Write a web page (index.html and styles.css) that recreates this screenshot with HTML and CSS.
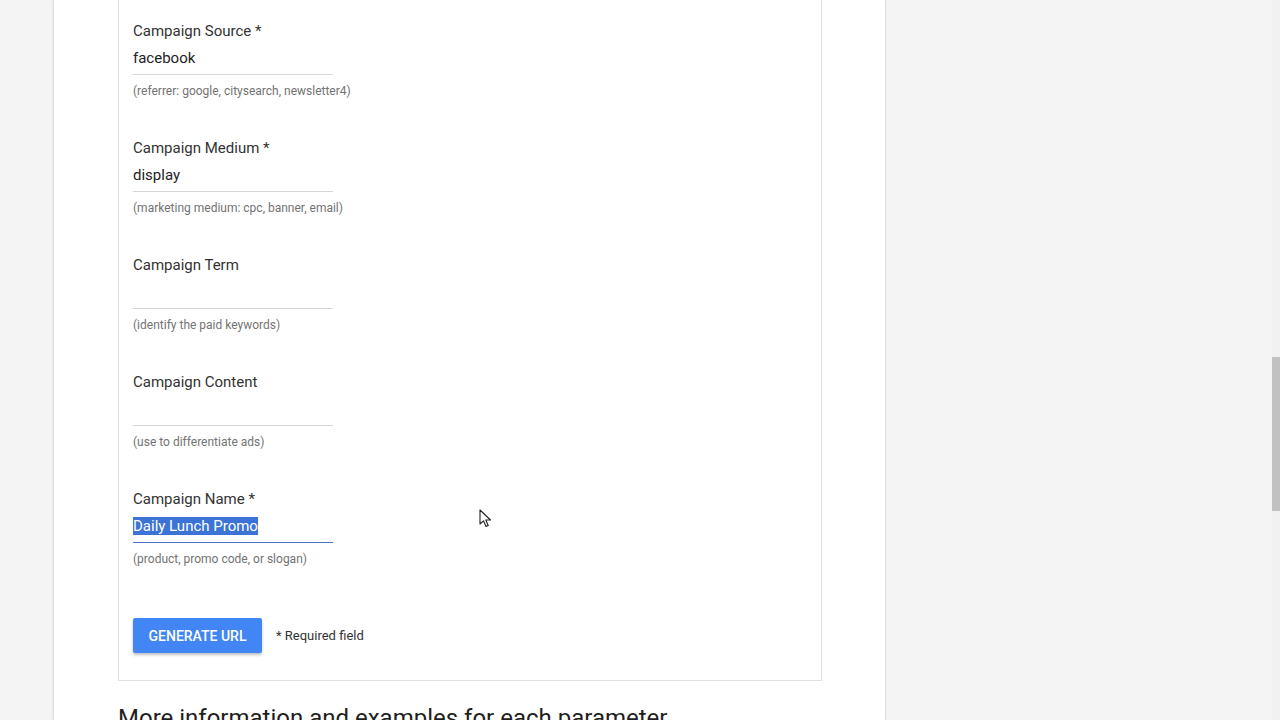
FILE: index.html
```html
<!DOCTYPE html>
<html lang="en">
<head>
<meta charset="utf-8">
<title>Campaign URL Builder</title>
<link rel="stylesheet" href="styles.css">
</head>
<body>
<div class="viewport">
  <main class="sheet">
    <section class="card">
      <div class="field">
        <label class="label">Campaign Source *</label>
        <div class="input">facebook</div>
        <div class="hint">(referrer: google, citysearch, newsletter4)</div>
      </div>
      <div class="field">
        <label class="label">Campaign Medium *</label>
        <div class="input">display</div>
        <div class="hint">(marketing medium: cpc, banner, email)</div>
      </div>
      <div class="field">
        <label class="label">Campaign Term</label>
        <div class="input"></div>
        <div class="hint">(identify the paid keywords)</div>
      </div>
      <div class="field">
        <label class="label">Campaign Content</label>
        <div class="input"></div>
        <div class="hint">(use to differentiate ads)</div>
      </div>
      <div class="field">
        <label class="label">Campaign Name *</label>
        <div class="input focused"><span class="selected">Daily Lunch Promo</span></div>
        <div class="hint">(product, promo code, or slogan)</div>
      </div>
      <div class="actions">
        <button class="btn">GENERATE URL</button>
        <span class="req">* Required field</span>
      </div>
    </section>
    <h2 class="heading">More information and examples for each parameter</h2>
  </main>
  <div class="cursor">
    <svg width="14" height="20" viewBox="0 0 14 20"><path d="M1 1 L1 15 L4.5 11.8 L7 17.5 L9.2 16.5 L6.8 11 L11.5 11 Z" fill="#fff" stroke="#222" stroke-width="1.1" stroke-linejoin="round"/></svg>
  </div>
</div>
<div class="scrollbar"><div class="thumb"></div></div>
</body>
</html>
```
FILE: styles.css
```css
html, body {
  margin: 0;
  padding: 0;
  height: 720px;
  overflow: hidden;
}
body {
  background: #f4f4f4;
  display: flex;
  font-family: Roboto, "Liberation Sans", Arial, sans-serif;
  color: #222;
}
.viewport {
  flex: 1;
  position: relative;
  padding-left: 54px;
}
.sheet {
  width: 832px;
  height: 720px;
  background: #fff;
  border-right: 1px solid #dcdcdc;
  box-shadow: -1px 0 2px rgba(0,0,0,0.12);
  padding-left: 64px;
  box-sizing: border-box;
  overflow: hidden;
}
.card {
  width: 704px;
  box-sizing: border-box;
  border: 1px solid #e0e0e0;
  border-top: none;
  padding: 22px 0 0 14px;
  height: 681px;
}
.field {
  height: 117px;
  display: flex;
  flex-direction: column;
}
.label {
  font-size: 15px;
  line-height: 18px;
  color: #333;
}
.input {
  width: 200px;
  height: 26px;
  margin-top: 9px;
  box-sizing: border-box;
  border-bottom: 1px solid #d6d6d6;
  font-size: 15px;
  line-height: 18px;
  color: #222;
}
.input.focused {
  border-bottom: 1px solid #4a6fc6;
}
.selected {
  background: #3b73d6;
  color: #fff;
}
.hint {
  margin-top: 9px;
  font-size: 12px;
  line-height: 14px;
  color: #737373;
}
.actions {
  display: flex;
  align-items: center;
  gap: 14px;
  margin-top: 11px;
}
.btn {
  width: 129px;
  height: 35px;
  background: #4285f4;
  color: #fff;
  border: none;
  border-radius: 2px;
  box-shadow: 0 2px 3px rgba(0,0,0,0.25);
  font-family: Roboto, "Liberation Sans", Arial, sans-serif;
  font-weight: 500;
  font-size: 14px;
  padding: 0;
}
.req {
  font-size: 13px;
  color: #333;
}
.heading {
  margin: 23px 0 0 0;
  font-size: 24px;
  font-weight: 400;
  color: #1f1f1f;
  line-height: 28px;
  white-space: nowrap;
}
.cursor {
  position: absolute;
  left: 479px;
  top: 509px;
}
.scrollbar {
  width: 8px;
  background: #f1f1f1;
  padding-top: 357px;
  box-sizing: border-box;
}
.thumb {
  height: 154px;
  background: #c1c1c1;
}
```
